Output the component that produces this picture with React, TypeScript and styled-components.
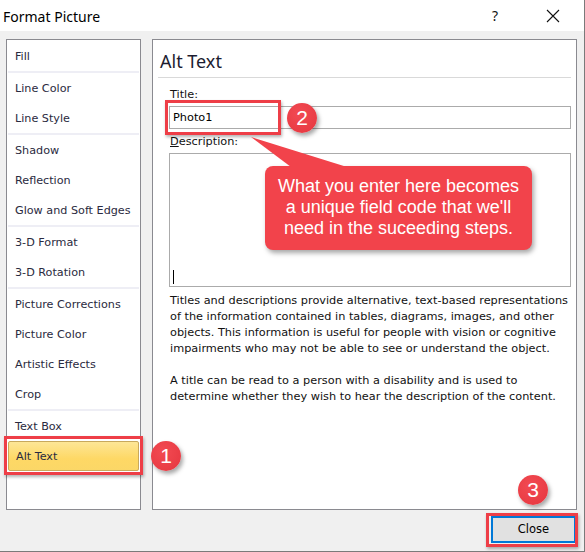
import React from 'react'
import styled, { createGlobalStyle } from 'styled-components'

const GlobalStyle = createGlobalStyle`
  html, body {
    margin: 0;
    padding: 0;
    background: #f0f0f0;
  }
  * {
    box-sizing: border-box;
  }
`

const uiFont = `"DejaVu Sans", Tahoma, sans-serif`
const red = '#ee3e47'

const navGroups: string[][] = [
  ['Fill'],
  ['Line Color', 'Line Style'],
  ['Shadow', 'Reflection', 'Glow and Soft Edges'],
  ['3-D Format', '3-D Rotation'],
  ['Picture Corrections', 'Picture Color', 'Artistic Effects', 'Crop'],
  ['Text Box', 'Alt Text']
]

const helpLines = [
  'Titles and descriptions provide alternative, text-based representations',
  'of the information contained in tables, diagrams, images, and other',
  'objects. This information is useful for people with vision or cognitive',
  'impairments who may not be able to see or understand the object.'
]

const noteLines = [
  'A title can be read to a person with a disability and is used to',
  'determine whether they wish to hear the description of the content.'
]

const App: React.FC = () => {
  const selected = 'Alt Text'

  return (
    <>
      <GlobalStyle />
      <Window>
        <TitleBar>
          <WindowTitle>Format Picture</WindowTitle>
          <HelpMark>?</HelpMark>
          <CloseIcon width="14" height="14" viewBox="0 0 14 14">
            <path d="M1 1 L13 13 M13 1 L1 13" stroke="#111" strokeWidth="1.1" />
          </CloseIcon>
        </TitleBar>

        <Body>
          <NavPanel>
            {navGroups.map((group, gi) => (
              <React.Fragment key={gi}>
                {gi > 0 && <NavSeparator />}
                {group.map(item =>
                  item === selected ? (
                    <SelectedItem key={item}>
                      {item}
                      <Highlight $inset="-6px -5px -5px -5px" />
                      <Badge $left={142} $top={-1}>1</Badge>
                    </SelectedItem>
                  ) : (
                    <NavItem key={item}>{item}</NavItem>
                  )
                )}
              </React.Fragment>
            ))}
          </NavPanel>

          <ContentPanel>
            <Heading>Alt Text</Heading>
            <Form>
              <FieldLabel>Title:</FieldLabel>
              <TitleField>
                <TitleInput>Photo1</TitleInput>
                <Highlight $inset="-6px auto -6px -4px" $width={116} />
                <Badge $left={118} $top={-3}>2</Badge>
              </TitleField>
              <FieldLabel $gap={5}>
                <u>D</u>escription:
              </FieldLabel>
              <DescriptionBox>
                <Caret />
                <Callout>
                  <CalloutTail width="110" height="32" viewBox="0 0 110 32">
                    <polygon points="0,0 40,30 96,30" fill="#f2434b" />
                  </CalloutTail>
                  What you enter here becomes
                  <br />a unique field code that we'll
                  <br />need in the suceeding steps.
                </Callout>
              </DescriptionBox>
              <HelpText>
                {helpLines.map(line => (
                  <HelpLine key={line}>{line}</HelpLine>
                ))}
              </HelpText>
              <HelpText $spaced>
                {noteLines.map(line => (
                  <HelpLine key={line}>{line}</HelpLine>
                ))}
              </HelpText>
            </Form>
          </ContentPanel>
        </Body>

        <Footer>
          <CloseButton>
            Close
            <Highlight $inset="-5px -4px -6px -7px" />
            <Badge $left={25} $top={-43}>3</Badge>
          </CloseButton>
        </Footer>
      </Window>
    </>
  )
}

const Window = styled.div`
  width: 585px;
  height: 552px;
  background: #f0f0f0;
  border-right: 1px solid #7a7a7a;
  border-bottom: 1px solid #7a7a7a;
  display: flex;
  flex-direction: column;
  overflow: hidden;
`

const TitleBar = styled.div`
  height: 31px;
  flex-shrink: 0;
  background: #ffffff;
  display: flex;
  align-items: center;
  padding-left: 3px;
`

const WindowTitle = styled.div`
  font-family: 'Noto Sans', 'Segoe UI', sans-serif;
  font-size: 14px;
  color: #000;
  flex: 1;
  padding-top: 1px;
`

const HelpMark = styled.div`
  font-family: 'Noto Sans', sans-serif;
  font-size: 14px;
  color: #111;
  width: 12px;
  margin-right: 42px;
`

const CloseIcon = styled.svg`
  margin-right: 24px;
`

const Body = styled.div`
  display: flex;
  gap: 11px;
  padding: 8px 7px 0 6px;
  height: 479px;
  flex-shrink: 0;
`

const NavPanel = styled.div`
  width: 135px;
  flex-shrink: 0;
  background: #fff;
  border: 1px solid #8a8a90;
  padding: 1px 0;
  display: flex;
  flex-direction: column;
  position: relative;
  z-index: 3;
`

const NavItem = styled.div`
  height: 30px;
  line-height: 31px;
  padding-left: 8px;
  font-family: ${uiFont};
  font-size: 11.2px;
  color: #2a2a40;
  white-space: nowrap;
`

const SelectedItem = styled(NavItem)`
  position: relative;
  margin: 0 1px;
  padding-left: 7px;
  line-height: 29px;
  border: 1px solid #c8a95c;
  border-radius: 2px;
  background: linear-gradient(#fde696, #fed865 60%, #fbd767);
`

const NavSeparator = styled.div`
  height: 2px;
  margin: 0 1px;
  background: #eeeef5;
`

const Highlight = styled.div<{ $inset: string; $width?: number }>`
  position: absolute;
  inset: ${p => p.$inset};
  ${p => (p.$width ? `width: ${p.$width}px;` : '')}
  border: 3px solid ${red};
  box-shadow: 1px 2px 3px rgba(0, 0, 0, 0.3);
  pointer-events: none;
`

const Badge = styled.div<{ $left: number; $top: number }>`
  position: absolute;
  left: ${p => p.$left}px;
  top: ${p => p.$top}px;
  width: 30px;
  height: 30px;
  border-radius: 50%;
  background: radial-gradient(circle at 40% 35%, #f24a52, #e5363f);
  box-shadow: 2px 3px 4px rgba(0, 0, 0, 0.35);
  color: #fff;
  font-family: 'Liberation Sans', Arial, sans-serif;
  font-size: 21px;
  line-height: 30px;
  text-align: center;
  z-index: 10;
`

const ContentPanel = styled.div`
  flex: 1;
  min-width: 0;
  background: #fff;
  border: 1px solid #8a8a90;
  display: flex;
  flex-direction: column;
`

const Heading = styled.div`
  margin: 0 5px;
  padding: 8px 0 3px 2px;
  border-bottom: 1px solid #d9d9d9;
  font-family: 'Noto Sans', 'Segoe UI', sans-serif;
  font-size: 18px;
  line-height: 26px;
  color: #1c1c30;
`

const Form = styled.div`
  padding: 9px 5px 0 16px;
  display: flex;
  flex-direction: column;
`

const FieldLabel = styled.div<{ $gap?: number }>`
  margin-top: ${p => p.$gap || 0}px;
  margin-bottom: 3px;
  padding-left: 1px;
  font-family: ${uiFont};
  font-size: 11.3px;
  line-height: 16px;
  color: #111;
`

const TitleField = styled.div`
  position: relative;
`

const TitleInput = styled.div`
  height: 23px;
  border: 1px solid #ababab;
  padding-left: 3px;
  font-family: ${uiFont};
  font-size: 11.3px;
  line-height: 21px;
  color: #000;
`

const DescriptionBox = styled.div`
  position: relative;
  height: 134px;
  border: 1px solid #ababab;
`

const Caret = styled.div`
  position: absolute;
  left: 3px;
  bottom: 2px;
  width: 1px;
  height: 14px;
  background: #000;
`

const Callout = styled.div`
  position: absolute;
  left: 95px;
  top: 12px;
  width: 267px;
  height: 84px;
  padding-top: 10px;
  border-radius: 8px;
  background: #f2434b;
  box-shadow: 2px 3px 5px rgba(0, 0, 0, 0.35);
  color: #fff;
  font-family: 'Liberation Sans', Arial, sans-serif;
  font-size: 18px;
  line-height: 21px;
  text-align: center;
  white-space: nowrap;
  z-index: 4;
`

const CalloutTail = styled.svg`
  position: absolute;
  left: -14px;
  top: -29px;
`

const HelpText = styled.div<{ $spaced?: boolean }>`
  margin-top: ${p => (p.$spaced ? 16 : 6)}px;
  padding-left: 1px;
  font-family: ${uiFont};
  font-size: 11.3px;
  line-height: 16px;
  color: #111;
`

const HelpLine = styled.div`
  white-space: nowrap;
`

const Footer = styled.div`
  display: flex;
  justify-content: flex-end;
  padding: 6px 8px 0 0;
`

const CloseButton = styled.div`
  position: relative;
  width: 85px;
  height: 27px;
  border: 2px solid #0078d7;
  background: #e1e1e1;
  font-family: ${uiFont};
  font-size: 11.5px;
  line-height: 23px;
  text-align: center;
  color: #000;
`

export default App
